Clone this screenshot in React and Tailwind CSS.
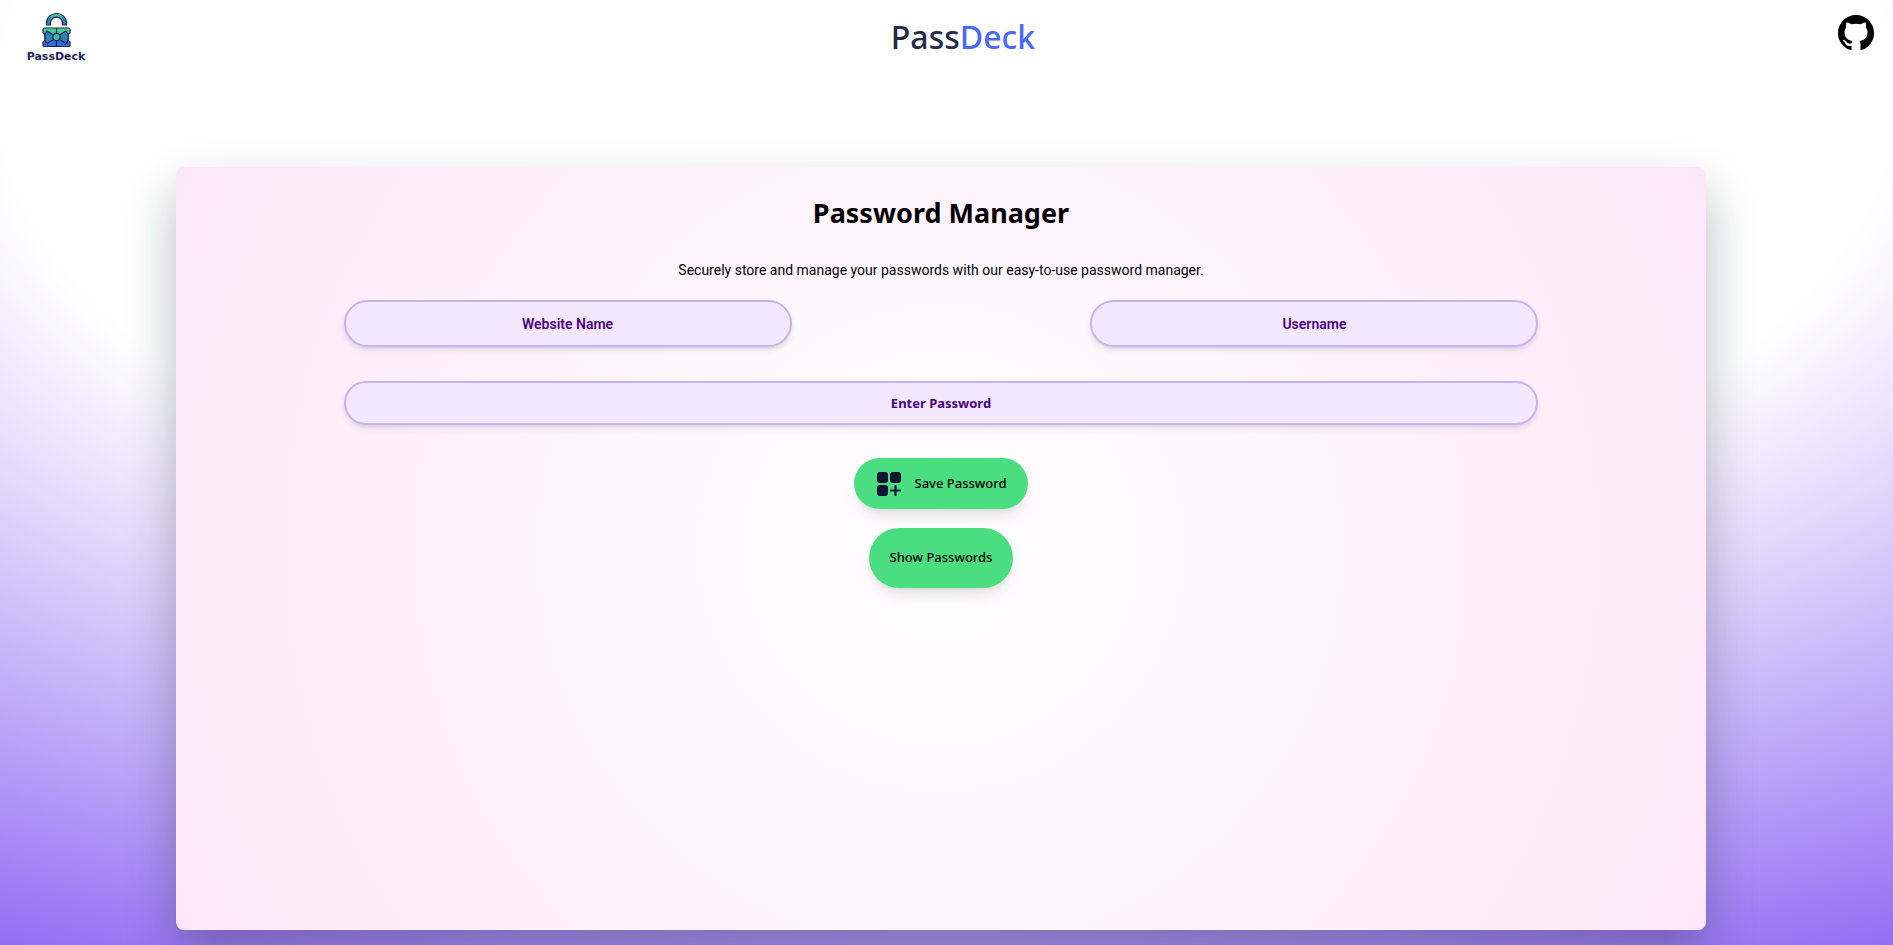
import { useState } from "react";

function Logo() {
  return (
    <svg viewBox="0 0 64 56" className="h-14 w-16" role="img" aria-label="PassDeck">
      <defs>
        <linearGradient id="lock" x1="0" y1="0" x2="0" y2="1">
          <stop offset="0" stopColor="#4be08e" />
          <stop offset="0.3" stopColor="#3dbb9d" />
          <stop offset="0.6" stopColor="#2f7fc4" />
          <stop offset="1" stopColor="#2f62e6" />
        </linearGradient>
        <linearGradient id="shackle" x1="0" y1="0" x2="0" y2="1">
          <stop offset="0" stopColor="#4be08e" />
          <stop offset="0.5" stopColor="#2d8fb4" />
          <stop offset="1" stopColor="#2d7fb8" />
        </linearGradient>
      </defs>
      <g stroke="#1d2156" strokeWidth="1.2" strokeLinejoin="round">
        <path d="M22.500 17v-2.500a10 9 0 0 1 20 0V17h-4v-2.500a6 5.300 0 0 0-12 0V17z" fill="url(#shackle)" />
        <path d="M20.500 20h24q1.500 0 1.500 1.500V25l-2 1.500v6l2 1.500v3q0 1.500-1.500 1.500h-24Q19 38.500 19 37v-3l2-1.500v-6L19 25v-3.500q0-1.500 1.500-1.500z" fill="url(#lock)" />
        <path d="M32.500 20v5M32.500 33v5.500" fill="none" />
        <path d="M23 23l6.500 4v4.500L23 35.500l-2-3V27zM42 23l-6.500 4v4.500l6.500 4 2-3V27z" fill="#2f83b5" />
        <circle cx="32.500" cy="29" r="3.700" fill="#3fb8a4" />
      </g>
      <text x="32" y="52" textAnchor="middle" fontSize="11" fontWeight="700" fill="#26225a" fontFamily="DejaVu Sans, sans-serif">PassDeck</text>
    </svg>
  );
}

function GithubIcon() {
  return (
    <svg viewBox="0 0 16 16" className="size-9" aria-hidden="true">
      <path d="M8 0C3.580 0 0 3.580 0 8c0 3.540 2.290 6.530 5.470 7.590.4.070.550-.170.550-.380 0-.190-.010-.820-.010-1.490-2.010.370-2.530-.490-2.690-.940-.090-.230-.480-.940-.820-1.130-.280-.150-.680-.520-.010-.530.630-.010 1.080.580 1.230.820.720 1.210 1.870.870 2.330.660.070-.520.280-.870.510-1.070-1.780-.200-3.640-.890-3.640-3.950 0-.870.310-1.590.820-2.150-.080-.200-.360-1.020.080-2.120 0 0 .670-.210 2.200.820.640-.180 1.320-.270 2-.270s1.360.090 2 .270c1.530-1.040 2.200-.820 2.200-.820.440 1.100.160 1.920.080 2.120.510.560.820 1.270.820 2.150 0 3.070-1.870 3.750-3.650 3.950.290.250.540.730.540 1.480 0 1.070-.010 1.930-.010 2.200 0 .210.150.460.550.380A8.010 8.010 0 0 0 16 8c0-4.420-3.580-8-8-8z" />
    </svg>
  );
}

function AddTileIcon() {
  return (
    <svg viewBox="0 0 24 24" className="size-6" fill="#121331" aria-hidden="true">
      <rect width="11" height="11" rx="3" />
      <rect x="13" width="11" height="11" rx="3" />
      <rect y="13" width="11" height="11" rx="3" />
      <path d="M18.500 14v9M14 18.500h9" stroke="#121331" strokeWidth="2.2" strokeLinecap="round" />
    </svg>
  );
}

const field =
  "rounded-full border-2 border-[#c4b5f0] bg-[#f3e8ff] px-4 text-center text-[#4b0082] shadow-md placeholder:text-[#4b0082] focus:outline-none focus:ring-2 focus:ring-purple-400";

export default function App() {
  const [form, setForm] = useState({ site: "", user: "", password: "" });
  const update = (e) => setForm({ ...form, [e.target.name]: e.target.value });

  return (
    <div className="flex min-h-screen flex-col bg-[radial-gradient(125%_125%_at_50%_10%,#fff_40%,#63e_100%)] pr-[11px] pb-[15px] font-['Noto_Sans',sans-serif] text-black">
      <header className="flex h-[76px] items-start justify-between pt-2 pr-2 pl-6">
        <a href="#home"><Logo /></a>
        <h1 className="pt-[9px] text-[32px] leading-10 font-medium text-[#272b45]">
          Pass<span className="text-[#4b68ff]">Deck</span>
        </h1>
        <a href="#github" aria-label="GitHub" className="pt-[7px]"><GithubIcon /></a>
      </header>
      <main className="mx-auto mt-[91px] flex w-[81.3%] flex-1 flex-col items-center rounded-lg bg-[radial-gradient(circle_at_center,#fff_0%,#fce7f8_100%)] shadow-[0_25px_50px_rgba(15,25,35,0.3)]">
        <h2 className="mt-7 text-[27px] leading-9 font-bold">Password Manager</h2>
        <p className="mt-[29px] font-[Roboto,sans-serif] text-sm leading-5">
          Securely store and manage your passwords with our easy-to-use password manager.
        </p>
        <form className="mt-5 flex w-[78.1%] flex-col items-center" onSubmit={(e) => e.preventDefault()}>
          <div className="flex w-full justify-between font-[Roboto,sans-serif] text-sm font-semibold">
            <input aria-label="Website Name" name="site" value={form.site} onChange={update} placeholder="Website Name" className={field + " h-[47px] w-[37.5%]"} />
            <input aria-label="Username" name="user" value={form.user} onChange={update} placeholder="Username" className={field + " h-[47px] w-[37.5%]"} />
          </div>
          <input aria-label="Enter Password" type="password" name="password" value={form.password} onChange={update} placeholder="Enter Password" className={field + " mt-[34px] h-11 w-full text-[13px] font-bold"} />
          <button type="submit" className="mt-[33px] flex h-[51px] items-center gap-[13px] rounded-full bg-[#4ade80] pr-[21px] pl-[23px] text-[13px] font-medium shadow-lg">
            <AddTileIcon />
            Save Password
          </button>
          <button type="button" className="mt-[19px] h-[60px] rounded-full bg-[#4ade80] px-[21px] text-[13px] font-medium shadow-lg">
            Show Passwords
          </button>
        </form>
      </main>
    </div>
  );
}
